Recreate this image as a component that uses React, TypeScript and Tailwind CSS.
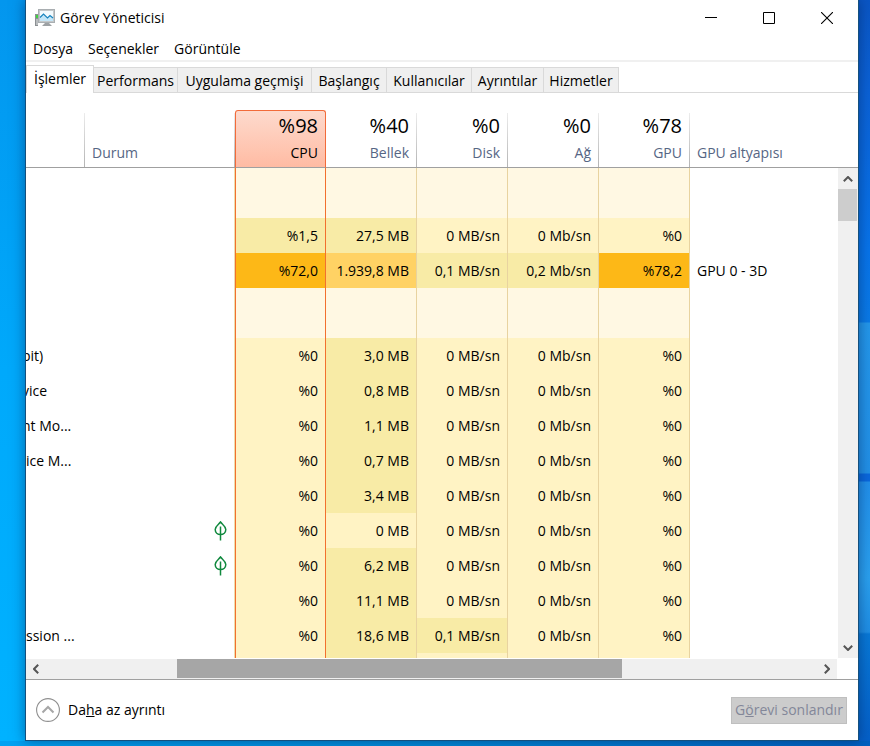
import React from "react";
import clsx from "clsx";

interface IRow {
	name?: string;
	clipped?: boolean;
	leaf?: boolean;
	group?: boolean;
	values?: string[];
	tones?: string[];
	engine?: string;
}

const TONES: Record<string, string> = {
	group: "bg-[#fff8e3]",
	low: "bg-[#fff3c4]",
	mid: "bg-[#f8eba6]",
	high: "bg-[#ffd264]",
	max: "bg-[#fdb817]",
};

const IDLE = ["low", "mid", "low", "low", "low"];

const ROWS: IRow[] = [
	{ group: true },
	{
		values: ["%1,5", "27,5 MB", "0 MB/sn", "0 Mb/sn", "%0"],
		tones: ["mid", "mid", "low", "low", "low"],
	},
	{
		values: ["%72,0", "1.939,8 MB", "0,1 MB/sn", "0,2 Mb/sn", "%78,2"],
		tones: ["max", "high", "mid", "mid", "max"],
		engine: "GPU 0 - 3D",
	},
	{ group: true },
	{ name: "bit)", clipped: true, values: ["%0", "3,0 MB", "0 MB/sn", "0 Mb/sn", "%0"] },
	{ name: "vice", clipped: true, values: ["%0", "0,8 MB", "0 MB/sn", "0 Mb/sn", "%0"] },
	{ name: "nt Mo...", clipped: true, values: ["%0", "1,1 MB", "0 MB/sn", "0 Mb/sn", "%0"] },
	{ name: "ice M...", values: ["%0", "0,7 MB", "0 MB/sn", "0 Mb/sn", "%0"] },
	{ values: ["%0", "3,4 MB", "0 MB/sn", "0 Mb/sn", "%0"] },
	{
		leaf: true,
		values: ["%0", "0 MB", "0 MB/sn", "0 Mb/sn", "%0"],
		tones: ["low", "low", "low", "low", "low"],
	},
	{ leaf: true, values: ["%0", "6,2 MB", "0 MB/sn", "0 Mb/sn", "%0"] },
	{ values: ["%0", "11,1 MB", "0 MB/sn", "0 Mb/sn", "%0"] },
	{
		name: "ssion ...",
		values: ["%0", "18,6 MB", "0,1 MB/sn", "0 Mb/sn", "%0"],
		tones: ["low", "mid", "mid", "low", "low"],
	},
];

const TABS = [
	{ title: "Performans", width: "w-[84px]" },
	{ title: "Uygulama geçmişi", width: "w-[134px]" },
	{ title: "Başlangıç", width: "w-[75px]" },
	{ title: "Kullanıcılar", width: "w-[85px]" },
	{ title: "Ayrıntılar", width: "w-[72px]" },
	{ title: "Hizmetler", width: "w-[75px]" },
];

const METRICS = [
	{ title: "CPU", total: "%98" },
	{ title: "Bellek", total: "%40" },
	{ title: "Disk", total: "%0" },
	{ title: "Ağ", total: "%0" },
	{ title: "GPU", total: "%78" },
];

// vertical hairline that fades out towards the top of a header cell
const DIVIDER =
	"bg-[linear-gradient(to_bottom,#ececec,#b4b4b4)] bg-[size:1px_54px] bg-no-repeat bg-right-bottom";

const Chevron = ({ className }: { className?: string }) => (
	<svg viewBox="0 0 10 6" className={clsx("w-[10px] h-[6px]", className)} fill="none">
		<path d="M0.8 5.2 5 1 9.2 5.2" stroke="#555" strokeWidth="2" />
	</svg>
);

const Leaf = () => (
	<svg viewBox="0 0 13 20" className="w-[13px] h-5 ml-auto" fill="none" stroke="#10893e" strokeWidth="1.5">
		<path d="M6.5 1C4.8 3.4 1.2 5 1.2 8.6c0 3 2.3 5 5.3 5s5.3-2 5.3-5C11.8 5 8.2 3.4 6.5 1Z" />
		<path d="M6.5 5.500v14" />
	</svg>
);

const AppIcon = () => (
	<svg viewBox="0 0 20 18" className="w-5 h-[18px]" fill="none">
		<rect x="0" y="5" width="3" height="12" fill="#8b8f92" />
		<rect x="1" y="6" width="2" height="3" fill="#41d341" />
		<rect x="1" y="10" width="2" height="6" fill="#b9bcbe" />
		<rect x="3.5" y="0.5" width="16" height="13" fill="#c4c8ca" stroke="#a9aeb1" />
		<rect x="5" y="2" width="13" height="10" fill="#f2fafe" />
		<path d="M5 8.500 8.500 5 12.500 9 15 6.500 18 9V12H5Z" fill="#c3e6f8" />
		<path d="M5 8.500 8.500 5 12.500 9 15 6.500 18 9" stroke="#1683be" strokeWidth="1.2" />
		<path d="M10 14h4l3 3H7Z" fill="#9da1a4" />
	</svg>
);

const TitleBar = () => (
	<header className="flex items-center h-9 pl-[9px] pr-0.5">
		<AppIcon />
		<h1 className="flex-grow pl-[5px]">Görev Yöneticisi</h1>
		<button aria-label="Simge durumuna küçült" className="w-[58px] h-9 flex items-center justify-center">
			<svg viewBox="0 0 12 12" className="w-3 h-3" stroke="#000">
				<path d="M0 5.5h12" />
			</svg>
		</button>
		<button aria-label="Ekranı kapla" className="w-[58px] h-9 flex items-center justify-center">
			<svg viewBox="0 0 12 12" className="w-3 h-3" fill="none" stroke="#000">
				<path d="M0.5 0.5h11v11h-11z" />
			</svg>
		</button>
		<button aria-label="Kapat" className="w-[58px] h-9 flex items-center justify-center">
			<svg viewBox="0 0 12 12" className="w-3 h-3" stroke="#000" strokeWidth="1.1">
				<path d="M0 0 12 12M12 0 0 12" />
			</svg>
		</button>
	</header>
);

const Tabs = () => (
	<div role="tablist" className="flex items-end mt-[3px]">
		<button
			role="tab"
			aria-selected="true"
			className="w-[68px] h-7 flex-none border border-b-0 border-[#d9d9d9] text-center pb-0.5"
		>
			İşlemler
		</button>
		{TABS.map((tab) => (
			<button
				key={tab.title}
				role="tab"
				aria-selected="false"
				className={clsx(
					"h-[26px] flex-none bg-[#efefef] border border-l-0 border-[#d9d9d9] whitespace-nowrap pt-0.5",
					tab.width
				)}
			>
				{tab.title}
			</button>
		))}
		<div className="flex-grow border-b border-[#d9d9d9]" />
	</div>
);

const Processes = () => (
	<table className="flex-grow table-fixed border-separate border-spacing-0">
		<colgroup>
			<col className="w-[59px]" />
			<col className="w-[150px]" />
			{METRICS.map((metric) => (
				<col key={metric.title} className="w-[91px]" />
			))}
			<col />
		</colgroup>
		<thead>
			<tr className="h-[58px] text-[#566684]">
				<th className={clsx("border-b border-[#a0a0a0]", DIVIDER)} />
				<th
					className={clsx(
						"border-b border-[#a0a0a0] align-bottom text-left font-normal pl-[7px] pb-1",
						DIVIDER
					)}
				>
					Durum
				</th>
				{METRICS.map((metric, index) => (
					<th
						key={metric.title}
						className={clsx(
							"border-b border-[#a0a0a0] align-bottom text-right font-normal pb-1",
							index === 0
								? "border-t border-x border-t-[#f26b3a] border-x-[#f26b3a] rounded-t-[3px] bg-linear-to-b from-[#fddacd] to-[#ffbba3] text-black pr-[7px]"
								: clsx("pr-2", DIVIDER)
						)}
					>
						<div className="text-xl leading-6 text-black">{metric.total}</div>
						<div className="mt-[5px]">{metric.title}</div>
					</th>
				))}
				<th className="border-b border-[#a0a0a0] align-bottom text-left font-normal pl-[7px] pb-1">
					GPU altyapısı
				</th>
			</tr>
		</thead>
		<tbody>
			{ROWS.map((row, i) => (
				<tr key={i} className={row.group ? "h-[50px]" : "h-[35px]"}>
					<td className="overflow-hidden whitespace-nowrap">
						<div className={clsx(row.clipped && "-ml-1")}>{row.name}</div>
					</td>
					<td className="border-r border-[#ecdcae] pr-[7px]">{row.leaf && <Leaf />}</td>
					{METRICS.map((metric, index) => (
						<td
							key={metric.title}
							className={clsx(
								"text-right whitespace-nowrap border-r pr-[7px]",
								index === 0 ? "border-l border-[#f2702e]" : "border-[#e8d3a0]",
								TONES[row.group ? "group" : (row.tones ?? IDLE)[index]]
							)}
						>
							{row.values?.[index]}
						</td>
					))}
					<td className="pl-[7px] whitespace-nowrap">{row.engine}</td>
				</tr>
			))}
			{/* top edge of the next row */}
			<tr className="h-[5px]">
				<td />
				<td className="border-r border-[#ecdcae]" />
				{METRICS.map((metric, index) => (
					<td
						key={metric.title}
						className={clsx(
							"border-r",
							index === 0 ? "border-l border-[#f2702e]" : "border-[#e8d3a0]",
							TONES[IDLE[index]]
						)}
					/>
				))}
				<td />
			</tr>
		</tbody>
	</table>
);

const Footer = () => (
	<footer className="flex items-center justify-between h-[61px] border-t border-[#a0a0a0] pl-[10px] pr-[11px]">
		<button className="flex items-center gap-2">
			<svg viewBox="0 0 24 24" className="w-6 h-6" fill="none">
				<circle cx="12" cy="12" r="11.4" stroke="#8f8f8f" strokeWidth="1.1" />
				<path d="M6.5 14.5 12 9l5.5 5.5" stroke="#a6a6a6" strokeWidth="2" />
			</svg>
			<span>
				Da<u>h</u>a az ayrıntı
			</span>
		</button>
		<button
			disabled
			className="h-[27px] w-[116px] whitespace-nowrap bg-[#cccccc] border border-[#bfbfbf] text-[#838799]"
		>
			G<u>ö</u>revi sonlandır
		</button>
	</footer>
);

const App = () => {
	return (
		<div className="bg-linear-to-r from-[#00a2f2] via-[#008ad8] to-[#0060c0] pb-[5px] font-['Open_Sans',sans-serif] text-sm leading-5 text-black">
			<div className="flex">
				<div className="w-[25px] flex-none bg-linear-to-b from-[#0396ee] via-[#00a9fb] to-[#00b2ff]" />
				<main className="relative flex-grow min-w-0 bg-white border border-t-0 border-[#14507e] shadow-[0_0_12px_rgba(0,30,80,0.5)]">
					<TitleBar />
					<nav className="flex items-center gap-[15px] h-[26px] pl-[7px] pt-0.5 border-b-2 border-[#f0f0f0]">
						<button>Dosya</button>
						<button>Seçenekler</button>
						<button>Görüntüle</button>
					</nav>
					<Tabs />
					<div className="flex mt-[17px]">
						<Processes />
						<div className="w-5 flex-none flex flex-col">
							<div className="h-[58px] border-b border-[#a0a0a0]" />
							<div className="flex-grow flex flex-col items-center bg-[#f0f0f0]">
								<div className="h-[21px] flex items-center">
									<Chevron />
								</div>
								<div className="w-full h-8 pr-px">
									<div className="h-full bg-[#cdcdcd]" />
								</div>
								<div className="mt-auto h-[21px] flex items-center">
									<Chevron className="rotate-180" />
								</div>
							</div>
						</div>
					</div>
					<div className="flex items-center h-5 mt-px mr-[21px] bg-[#f0f0f0]">
						<div className="w-[151px] pl-[5px]">
							<Chevron className="-rotate-90" />
						</div>
						<div className="w-[445px] h-[19px] self-start bg-[#a6a6a6]" />
						<div className="flex-grow flex justify-end pr-[5px]">
							<Chevron className="rotate-90" />
						</div>
					</div>
					<Footer />
				</main>
				<div className="w-[11px] flex-none bg-[linear-gradient(to_bottom,#0a56c4_0px,#0b62d6_90px,#0874ea_250px,#0a7ae6_322px,#2497ea_323px,#2290e6_473px,#0a68dc_474px,#0a68dc_481px,#2290ea_482px,#2aa0ee_578px,#1f8ee4_632px,#0878d6_634px,#0560c8_740px)]" />
			</div>
		</div>
	);
};

export default App;
